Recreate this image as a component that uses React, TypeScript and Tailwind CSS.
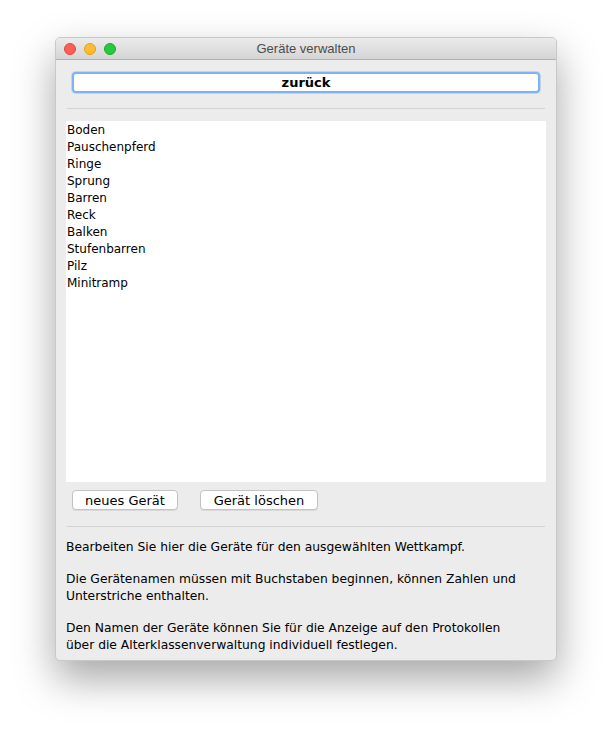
import React from "react";

const items = [
  "Boden",
  "Pauschenpferd",
  "Ringe",
  "Sprung",
  "Barren",
  "Reck",
  "Balken",
  "Stufenbarren",
  "Pilz",
  "Minitramp",
];

export default function App() {
  return (
    <div className="w-[612px] h-[734px] bg-white pt-[37px] pl-[55px] font-['DejaVu_Sans',sans-serif] text-[12px] text-black">
      <div className="w-[502px] h-[624px] rounded-[5px] border border-[#c8c8c8] bg-[#ececec] shadow-[0_18px_40px_rgba(0,0,0,0.35)] flex flex-col overflow-hidden">
        <div className="h-[22px] flex items-center relative bg-gradient-to-b from-[#ebebeb] to-[#d5d5d5] border-b border-[#b1b1b1]">
          <div className="flex gap-[8px] pl-[8px]">
            <span className="w-[12px] h-[12px] rounded-full bg-[#fd5f57] border border-[#e2463f]" />
            <span className="w-[12px] h-[12px] rounded-full bg-[#febc2e] border border-[#e1a116]" />
            <span className="w-[12px] h-[12px] rounded-full bg-[#28c840] border border-[#14ae2a]" />
          </div>
          <div className="absolute inset-0 flex items-center justify-center text-[13px] text-[#4d4d4d] font-['Liberation_Sans',sans-serif]">
            Geräte verwalten
          </div>
        </div>

        <div className="flex flex-col px-[10px]">
          <button className="mt-[12px] mx-[6px] h-[21px] rounded-[4px] bg-white border-2 border-[#7fb2ee] shadow-[0_0_0_1px_rgba(127,178,238,0.4)] text-[13px] font-bold leading-none flex items-center justify-center">
            zurück
          </button>
          <div className="mt-[15px] h-px bg-[#d2d2d2] mx-px" />
          <div className="mt-[12px] h-[361px] bg-white pt-[1px] pl-[1px]">
            {items.map((it) => (
              <div key={it} className="h-[17px] leading-[17px]">
                {it}
              </div>
            ))}
          </div>
          <div className="flex gap-[22px] mt-[8px] pl-[6px]">
            <button className="w-[106px] h-[20px] rounded-[4px] bg-white border border-[#c3c3c3] shadow-[0_1px_0_rgba(0,0,0,0.08)] text-[13px] leading-none">
              neues Gerät
            </button>
            <button className="w-[118px] h-[20px] rounded-[4px] bg-white border border-[#c3c3c3] shadow-[0_1px_0_rgba(0,0,0,0.08)] text-[13px] leading-none">
              Gerät löschen
            </button>
          </div>
          <div className="mt-[16px] h-px bg-[#d2d2d2] mx-px" />
          <div className="mt-[12px] leading-[17px] text-[12.3px]">
            <p>Bearbeiten Sie hier die Geräte für den ausgewählten Wettkampf.</p>
            <p className="mt-[15px]">
              Die Gerätenamen müssen mit Buchstaben beginnen, können Zahlen und
              <br />
              Unterstriche enthalten.
            </p>
            <p className="mt-[15px]">
              Den Namen der Geräte können Sie für die Anzeige auf den Protokollen
              <br />
              über die Alterklassenverwaltung individuell festlegen.
            </p>
          </div>
        </div>
      </div>
    </div>
  );
}
